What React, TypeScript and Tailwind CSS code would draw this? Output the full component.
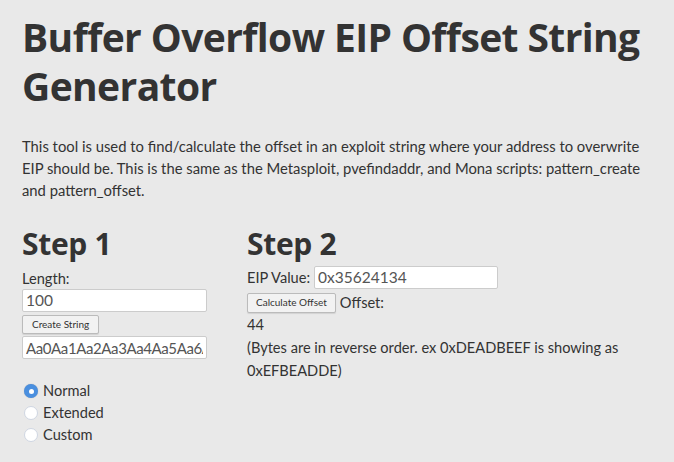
function Radio({ label, checked }: { label: string; checked?: boolean }) {
  return (
    <label className="flex items-center gap-[5px] h-[22px]">
      {checked ? (
        <span className="w-[14px] h-[14px] rounded-full bg-[#4a8fdf] flex items-center justify-center shadow-[0_0_1px_rgba(0,0,0,0.3)]">
          <span className="w-[5px] h-[5px] rounded-full bg-white" />
        </span>
      ) : (
        <span className="w-[14px] h-[14px] rounded-full bg-white border border-[#cfd6e2]" />
      )}
      <span>{label}</span>
    </label>
  );
}

export default function App() {
  return (
    <div className="min-h-[462px] bg-[#e9e9e9] text-[#333] px-[22px] pt-[12px] font-['Open_Sans',sans-serif]">
      <h1 className="text-[39px] leading-[49px] font-bold tracking-[-0.6px]">
        Buffer Overflow EIP Offset String Generator
      </h1>
      <p className="mt-[25px] w-[626px] text-[14.8px] leading-[22px] font-['Lato',sans-serif]">
        This tool is used to find/calculate the offset in an exploit string where your address to overwrite EIP
        should be. This is the same as the Metasploit, pvefindaddr, and Mona scripts: pattern_create and
        pattern_offset.
      </p>

      <div className="mt-[24px] flex gap-[40px] font-['Lato',sans-serif] text-[14.6px]">
        <div className="w-[185px] flex flex-col">
          <h2 className="text-[30px] leading-[38px] font-bold font-['Open_Sans',sans-serif] tracking-[-0.3px]">
            Step 1
          </h2>
          <label className="leading-[20px] mt-[6px]">Length:</label>
          <input
            defaultValue="100"
            className="h-[23px] w-[185px] bg-white border border-[#ccc] rounded-[2px] px-[3px] text-[15.5px] text-[#555] outline-none"
          />
          <button className="mt-[3px] self-start h-[19px] px-[9px] text-[10px] bg-[#f2f2f2] border border-[#bbb] rounded-[2px] shadow-[0_1px_1px_rgba(0,0,0,0.1)]">
            Create String
          </button>
          <input
            defaultValue="Aa0Aa1Aa2Aa3Aa4Aa5Aa6Aa7Aa8Aa9Ab0Ab1Ab2"
            className="mt-[2px] h-[23px] w-[185px] bg-white border border-[#ccc] rounded-[2px] px-[3px] text-[15px] tracking-[-0.4px] text-[#555] outline-none"
          />
          <div className="mt-[21px] flex flex-col pl-[2px]">
            <Radio label="Normal" checked />
            <Radio label="Extended" />
            <Radio label="Custom" />
          </div>
        </div>

        <div className="flex flex-col">
          <h2 className="text-[30px] leading-[38px] font-bold font-['Open_Sans',sans-serif] tracking-[-0.3px]">
            Step 2
          </h2>
          <div className="mt-[3px] flex items-center gap-[4px]">
            <span>EIP Value:</span>
            <input
              defaultValue="0x35624134"
              className="h-[23px] w-[184px] bg-white border border-[#ccc] rounded-[2px] px-[3px] text-[15.5px] text-[#555] outline-none"
            />
          </div>
          <div className="mt-[3px] flex items-center gap-[4px]">
            <button className="h-[20px] px-[8px] text-[10px] bg-[#f2f2f2] border border-[#bbb] rounded-[2px] shadow-[0_1px_1px_rgba(0,0,0,0.1)]">
              Calculate Offset
            </button>
            <span>Offset:</span>
          </div>
          <div className="leading-[22px]">44</div>
          <div className="leading-[23px] w-[380px]">
            (Bytes are in reverse order. ex 0xDEADBEEF is showing as 0xEFBEADDE)
          </div>
        </div>
      </div>
    </div>
  );
}
